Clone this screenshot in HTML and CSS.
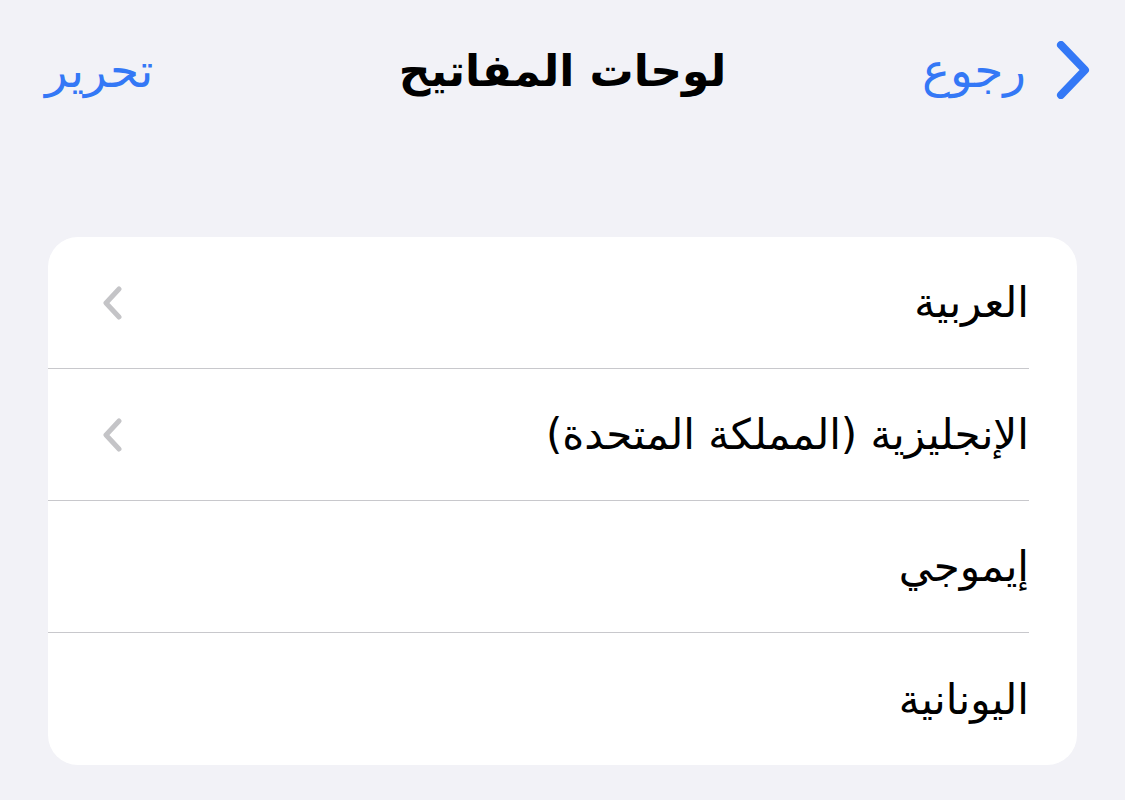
FILE: index.html
```
<!DOCTYPE html>
<html lang="ar" dir="rtl">
<head>
<meta charset="utf-8">
<link rel="stylesheet" href="styles.css">
</head>
<body>
<div class="screen">
  <header class="nav">
    <div class="back">
      <svg class="back-chev" width="34" height="58" viewBox="0 0 34 58"><polyline points="5,4 29,29 5,54" fill="none" stroke="#3478f6" stroke-width="8" stroke-linecap="round" stroke-linejoin="round"/></svg>
      <span class="back-label">رجوع</span>
    </div>
    <div class="title">لوحات المفاتيح</div>
    <div class="edit">تحرير</div>
  </header>
  <main class="list">
    <div class="row">
      <span class="label">العربية</span>
      <svg class="chev" width="22" height="34" viewBox="0 0 22 34"><polyline points="17,3 4,17 17,31" fill="none" stroke="#c4c4c7" stroke-width="5" stroke-linecap="round" stroke-linejoin="round"/></svg>
    </div>
    <div class="row">
      <span class="label">الإنجليزية (المملكة المتحدة)</span>
      <svg class="chev" width="22" height="34" viewBox="0 0 22 34"><polyline points="17,3 4,17 17,31" fill="none" stroke="#c4c4c7" stroke-width="5" stroke-linecap="round" stroke-linejoin="round"/></svg>
    </div>
    <div class="row">
      <span class="label">إيموجي</span>
    </div>
    <div class="row last">
      <span class="label">اليونانية</span>
    </div>
  </main>
</div>
</body>
</html>
```
FILE: styles.css
```
html, body {
  margin: 0;
  padding: 0;
  background: #f2f2f7;
}
body {
  font-family: "DejaVu Sans", "Noto Sans", sans-serif;
  color: #000;
  width: 1125px;
  height: 800px;
  overflow: hidden;
}
.screen {
  display: flex;
  flex-direction: column;
}
.nav {
  height: 140px;
  display: flex;
  align-items: center;
  justify-content: space-between;
  padding: 0 35px 0 45px;
  position: relative;
}
.back {
  display: flex;
  align-items: center;
  gap: 30px;
  color: #3478f6;
}
.back-label, .edit {
  font-size: 47px;
  color: #3478f6;
}
.title {
  position: absolute;
  left: 0;
  right: 0;
  text-align: center;
  font-size: 44px;
  font-weight: bold;
  pointer-events: none;
}
.list {
  margin: 97px 48px 0;
  background: #fff;
  border-radius: 30px;
  overflow: hidden;
}
.row {
  height: 132px;
  margin-right: 48px;
  padding-left: 102px;
  display: flex;
  align-items: center;
  justify-content: space-between;
  border-bottom: 1px solid #c8c8cc;
  box-sizing: border-box;
}
.row.last {
  border-bottom: none;
}
.label {
  font-size: 42px;
}
.chev {
  margin-left: -48px;
}
```
